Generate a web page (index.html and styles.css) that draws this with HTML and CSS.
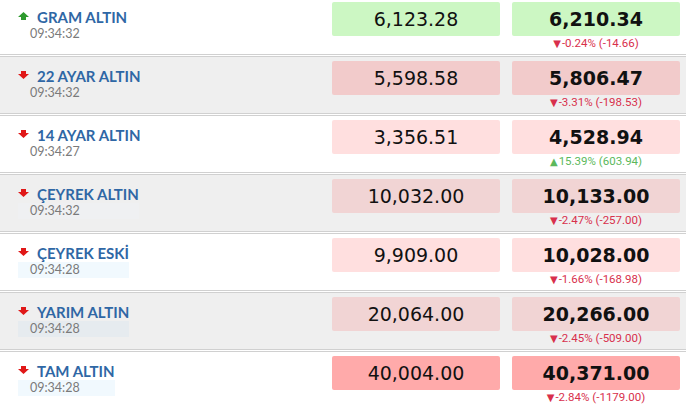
FILE: index.html
```html
<!DOCTYPE html>
<html>
<head>
<meta charset="utf-8">
<link rel="stylesheet" href="styles.css">
</head>
<body>
<div class="list">
  <div class="row">
    <div class="info">
      <div class="label">
        <div class="name"><svg class="arr" viewBox="0 0 11 8"><polygon class="up" points="3,8 8,8 8,5 11,5 5.5,0 0,5 3,5"/></svg>GRAM ALTIN</div>
        <div class="time">09:34:32</div>
      </div>
    </div>
    <div class="box green">6,123.28</div>
    <div class="col">
      <div class="box bold green">6,210.34</div>
      <div class="chg down"><span class="tri">▼</span>-0.24% (-14.66)</div>
    </div>
  </div>
  <div class="row alt">
    <div class="info">
      <div class="label">
        <div class="name"><svg class="arr" viewBox="0 0 11 8"><polygon class="dn" points="3,0 8,0 8,3 11,3 5.5,8 0,3 3,3"/></svg>22 AYAR ALTIN</div>
        <div class="time">09:34:32</div>
      </div>
    </div>
    <div class="box red2">5,598.58</div>
    <div class="col">
      <div class="box bold red2">5,806.47</div>
      <div class="chg down"><span class="tri">▼</span>-3.31% (-198.53)</div>
    </div>
  </div>
  <div class="row">
    <div class="info">
      <div class="label">
        <div class="name"><svg class="arr" viewBox="0 0 11 8"><polygon class="dn" points="3,0 8,0 8,3 11,3 5.5,8 0,3 3,3"/></svg>14 AYAR ALTIN</div>
        <div class="time">09:34:27</div>
      </div>
    </div>
    <div class="box red1">3,356.51</div>
    <div class="col">
      <div class="box bold red1">4,528.94</div>
      <div class="chg up"><span class="tri">▲</span>15.39% (603.94)</div>
    </div>
  </div>
  <div class="row alt">
    <div class="info">
      <div class="label">
        <div class="name"><svg class="arr" viewBox="0 0 11 8"><polygon class="dn" points="3,0 8,0 8,3 11,3 5.5,8 0,3 3,3"/></svg>ÇEYREK ALTIN</div>
        <div class="time hl-a">09:34:32</div>
      </div>
    </div>
    <div class="box red3">10,032.00</div>
    <div class="col">
      <div class="box bold red3">10,133.00</div>
      <div class="chg down"><span class="tri">▼</span>-2.47% (-257.00)</div>
    </div>
  </div>
  <div class="row">
    <div class="info">
      <div class="label">
        <div class="name"><svg class="arr" viewBox="0 0 11 8"><polygon class="dn" points="3,0 8,0 8,3 11,3 5.5,8 0,3 3,3"/></svg>ÇEYREK ESKİ</div>
        <div class="time hl-b">09:34:28</div>
      </div>
    </div>
    <div class="box red1">9,909.00</div>
    <div class="col">
      <div class="box bold red1">10,028.00</div>
      <div class="chg down"><span class="tri">▼</span>-1.66% (-168.98)</div>
    </div>
  </div>
  <div class="row alt">
    <div class="info">
      <div class="label">
        <div class="name"><svg class="arr" viewBox="0 0 11 8"><polygon class="dn" points="3,0 8,0 8,3 11,3 5.5,8 0,3 3,3"/></svg>YARIM ALTIN</div>
        <div class="time hl-c">09:34:28</div>
      </div>
    </div>
    <div class="box red3">20,064.00</div>
    <div class="col">
      <div class="box bold red3">20,266.00</div>
      <div class="chg down"><span class="tri">▼</span>-2.45% (-509.00)</div>
    </div>
  </div>
  <div class="row">
    <div class="info">
      <div class="label">
        <div class="name"><svg class="arr" viewBox="0 0 11 8"><polygon class="dn" points="3,0 8,0 8,3 11,3 5.5,8 0,3 3,3"/></svg>TAM ALTIN</div>
        <div class="time hl-b">09:34:28</div>
      </div>
    </div>
    <div class="box red4">40,004.00</div>
    <div class="col">
      <div class="box bold red4">40,371.00</div>
      <div class="chg down"><span class="tri">▼</span>-2.84% (-1179.00)</div>
    </div>
  </div>
</div>
</body>
</html>
```
FILE: styles.css
```css
html, body {
  margin: 0;
  padding: 0;
  background: #fff;
  overflow: hidden;
}
body {
  font-family: "Lato", "Liberation Sans", sans-serif;
}
.list {
  margin-top: -3px;
  display: flex;
  flex-direction: column;
  gap: 1px;
}
.row {
  display: flex;
  align-items: flex-start;
  height: 52px;
  border-top: 1px solid #d0d0d0;
  border-bottom: 1px solid #d0d0d0;
  padding: 4px 6px 0 0;
  background: #fff;
}
.row.alt {
  background: #efefef;
}
.info {
  flex: 1;
  padding: 7px 0 0 18px;
}
.label {
  display: inline-block;
}
.name {
  font-weight: 700;
  font-size: 15px;
  line-height: 17px;
  color: #2f67a5;
  display: flex;
  align-items: center;
  white-space: nowrap;
}
.arr {
  width: 11px;
  height: 8px;
  margin-right: 8px;
  margin-top: -3px;
}
.arr .up { fill: #2e9a2e; }
.arr .dn { fill: #e01818; }
.time {
  font-size: 12.5px;
  line-height: 16px;
  color: #7a7a7a;
  padding-left: 12px;
}
.hl-a { background: #eff0f2; }
.hl-b { background: #f1f9fe; }
.hl-c { background: #e6ebef; }
.box {
  width: 168px;
  height: 34px;
  border-radius: 2px;
  display: flex;
  align-items: center;
  justify-content: center;
  font-family: "DejaVu Sans", sans-serif;
  font-size: 19px;
  color: #111;
}
.box.bold {
  font-weight: 700;
}
.col {
  margin-left: 12px;
  display: flex;
  flex-direction: column;
  align-items: center;
  width: 168px;
}
.green { background: #ccf7c3; }
.red1 { background: #ffdfdf; }
.red2 { background: #f2cbcb; }
.red3 { background: #f1d4d4; }
.red4 { background: #ffaaaa; }
.chg {
  font-family: "Roboto", "Liberation Sans", sans-serif;
  font-size: 11.5px;
  line-height: 14px;
  margin-top: 0;
  white-space: nowrap;
}
.chg.down { color: #d8304c; }
.chg.up { color: #5cb85c; }
.tri {
  font-family: "DejaVu Sans", sans-serif;
  font-size: 10px;
  margin-right: 1px;
}
```
